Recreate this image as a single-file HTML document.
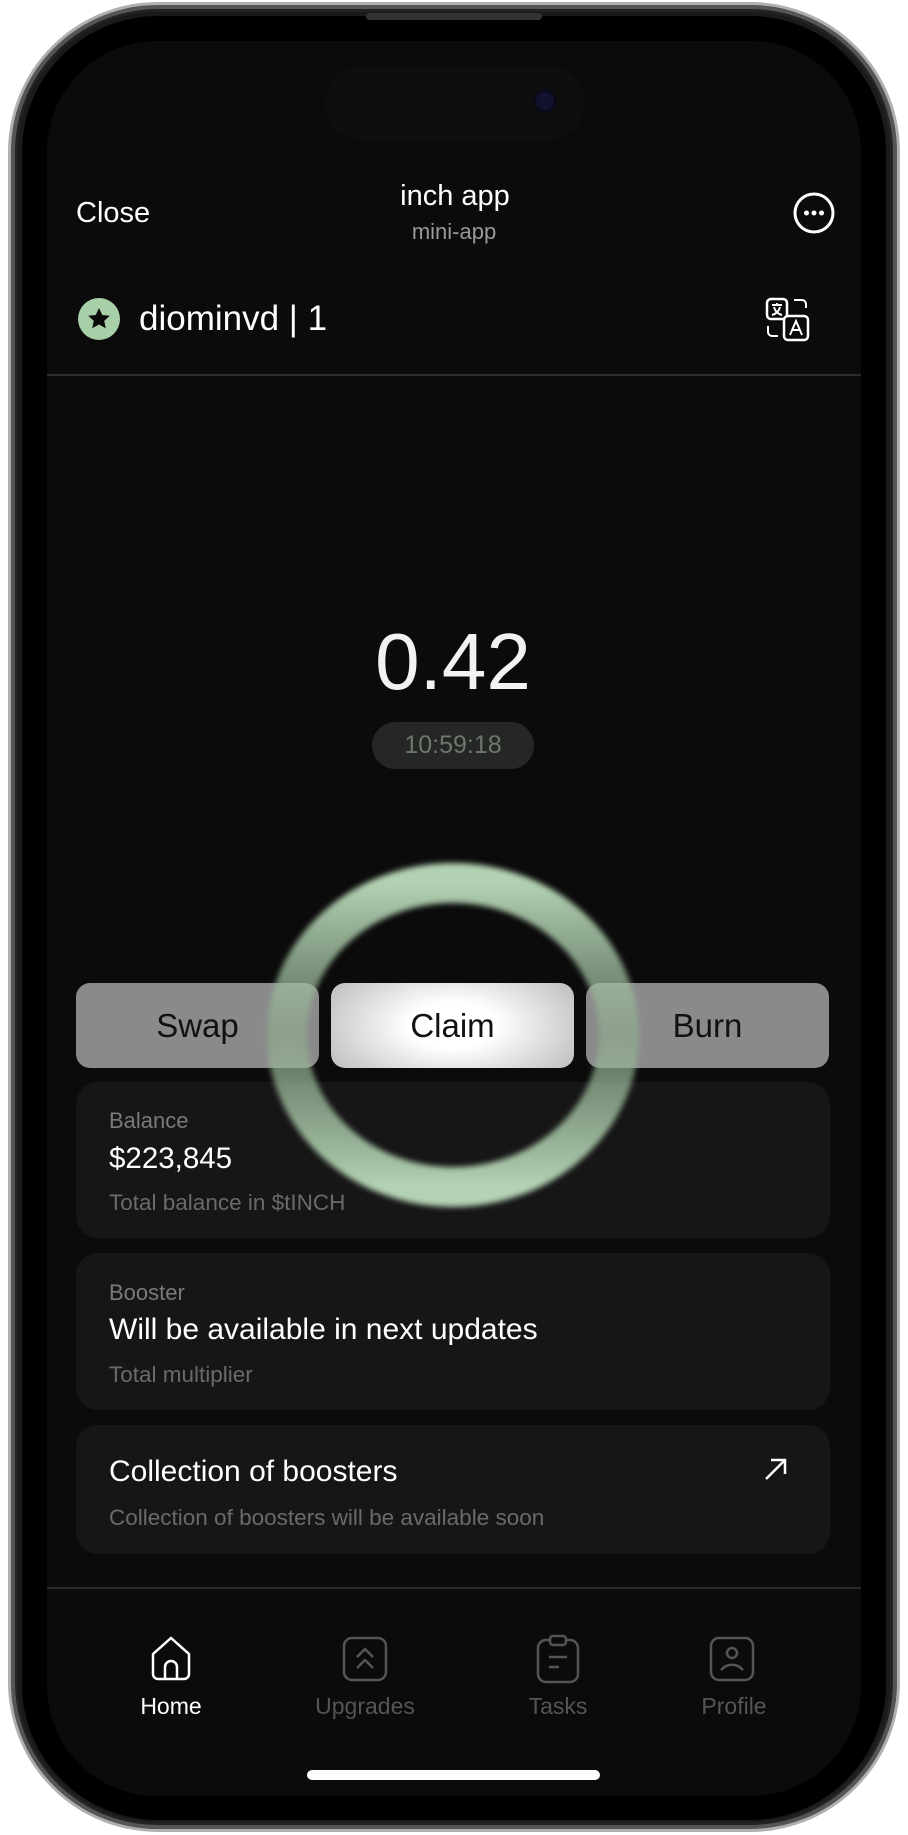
<!DOCTYPE html>
<html><head><meta charset="utf-8"><style>
*{margin:0;padding:0;box-sizing:border-box}
body{width:908px;height:1835px;background:#fff;position:relative;overflow:hidden;font-family:"Liberation Sans",sans-serif}
.frame{position:absolute;left:8px;top:2px;width:892px;height:1830px;border-radius:150px;background:#1a1a1a;border:3px solid #b0b0b0;box-shadow:inset 0 0 0 4px #555,inset 0 0 0 7px #222}
.bez{position:absolute;left:22px;top:16px;width:864px;height:1804px;border-radius:136px;background:#000}
.screen{position:absolute;left:47px;top:41px;width:814px;height:1755px;border-radius:110px;background:#0b0b0b;overflow:hidden}
.a{position:absolute}
.t{position:absolute;white-space:nowrap;line-height:1}
.btn{position:absolute;top:983px;height:85px;width:243px;border-radius:14px;background:#8a8a8a;color:#111;font-size:33px;display:flex;align-items:center;justify-content:center}
.card{position:absolute;left:76px;width:754px;background:#161616;border-radius:22px}
.nav{position:absolute;top:1693px;font-size:23px;color:#555;transform:translateX(-50%)}
</style></head><body>
<div class="frame"></div>
<div class="bez"></div>
<div class="a" style="left:366px;top:13px;width:176px;height:7px;border-radius:4px;background:#333"></div>
<div class="screen"></div>
<div class="a" style="left:325px;top:66px;width:260px;height:74px;border-radius:37px;background:#0e0e0e"></div>
<div class="a" style="left:536px;top:92px;width:18px;height:18px;border-radius:50%;background:#111130;box-shadow:0 0 0 3px #0a0a18"></div>
<div class="t" style="left:76px;top:199px;font-size:29px;color:#fff">Close</div>
<div class="t" style="left:0;width:910px;text-align:center;top:182px;font-size:29px;color:#fff">inch app</div>
<div class="t" style="left:0;width:908px;text-align:center;top:221px;font-size:22px;color:#999">mini-app</div>
<svg class="a" style="left:793px;top:192px" width="42" height="42" viewBox="0 0 42 42"><circle cx="21" cy="21" r="19" fill="none" stroke="#fff" stroke-width="3"/><circle cx="13.5" cy="21" r="2.5" fill="#fff"/><circle cx="21" cy="21" r="2.5" fill="#fff"/><circle cx="28.5" cy="21" r="2.5" fill="#fff"/></svg>
<svg class="a" style="left:78px;top:298px" width="42" height="42" viewBox="0 0 42 42"><circle cx="21" cy="21" r="21" fill="#a8d0a8"/><path d="M21 10l3.3 7 7.5.8-5.6 5.1 1.6 7.4L21 26.5l-6.8 3.8 1.6-7.4-5.6-5.1 7.5-.8z" fill="#0b0b0b"/></svg>
<div class="t" style="left:139px;top:301px;font-size:35px;color:#fff">diominvd | 1</div>
<svg class="a" style="left:764px;top:296px" width="48" height="48" viewBox="0 0 48 48" fill="none" stroke="#fff" stroke-width="2.5"><rect x="3" y="3" width="20" height="20" rx="4"/><rect x="20" y="20" width="24" height="24" rx="4" fill="#0b0b0b"/><path d="M8 9h10M13 7v2M10 11c1 4 4 7 8 8M16 11c-1 4-4 7-8 8" stroke-width="2"/><path d="M26 39l6-14 6 14M28.5 34h7" stroke-width="2"/><path d="M30 4h8a4 4 0 0 1 4 4v4M4 30v6a4 4 0 0 0 4 4h6" stroke-width="2"/></svg>
<div class="a" style="left:47px;top:374px;width:814px;height:2px;background:#2c2c2c"></div>
<div class="t" style="left:0;width:906px;text-align:center;top:622px;font-size:80px;color:#f2f2f2">0.42</div>
<div class="a" style="left:372px;top:722px;width:162px;height:47px;border-radius:24px;background:#252725"></div>
<div class="t" style="left:372px;width:162px;text-align:center;top:733px;font-size:25px;color:#6f756f">10:59:18</div>
<div class="btn" style="left:76px">Swap</div>
<div class="btn" style="left:331px;background:radial-gradient(ellipse 60% 90% at 50% 50%,#fff 30%,#bdbdbd 100%)">Claim</div>
<div class="btn" style="left:586px">Burn</div>
<div class="card" style="top:1082px;height:156px"></div>
<div class="t" style="left:109px;top:1110px;font-size:22px;color:#7a7a7a">Balance</div>
<div class="t" style="left:109px;top:1144px;font-size:29.5px;color:#fff">$223,845</div>
<div class="t" style="left:109px;top:1192px;font-size:22.5px;color:#6a6a6a">Total balance in $tINCH</div>
<svg class="a" style="left:253px;top:855px;filter:blur(3px)" width="400" height="360" viewBox="0 0 400 360"><defs><linearGradient id="g" x1="0" y1="0" x2="0" y2="1"><stop offset="0" stop-color="#bcdcbc" stop-opacity=".95"/><stop offset=".5" stop-color="#8fae8f" stop-opacity=".6"/><stop offset="1" stop-color="#bcdcbc" stop-opacity=".95"/></linearGradient></defs><ellipse cx="200" cy="180" rx="166" ry="152" fill="none" stroke="url(#g)" stroke-width="40"/></svg>
<div class="card" style="top:1253px;height:157px"></div>
<div class="t" style="left:109px;top:1282px;font-size:22px;color:#7a7a7a">Booster</div>
<div class="t" style="left:109px;top:1315px;font-size:30px;color:#fff">Will be available in next updates</div>
<div class="t" style="left:109px;top:1364px;font-size:22.5px;color:#6a6a6a">Total multiplier</div>
<div class="card" style="top:1425px;height:129px"></div>
<div class="t" style="left:109px;top:1457px;font-size:30px;color:#fff">Collection of boosters</div>
<div class="t" style="left:109px;top:1507px;font-size:22.5px;color:#6a6a6a">Collection of boosters will be available soon</div>
<svg class="a" style="left:762px;top:1455px" width="28" height="28" viewBox="0 0 28 28" fill="none" stroke="#fff" stroke-width="2.5"><path d="M4 24L23 5M9 5h14v14"/></svg>
<div class="a" style="left:47px;top:1587px;width:814px;height:2px;background:#2c2c2c"></div>
<svg class="a" style="left:148px;top:1636px" width="46" height="46" viewBox="0 0 46 46" fill="none" stroke="#fff" stroke-width="2.5"><path d="M5 18L23 2l18 16v20a5 5 0 0 1-5 5H10a5 5 0 0 1-5-5z"/><path d="M17 43V31a6 6 0 0 1 12 0v12"/></svg>
<svg class="a" style="left:342px;top:1636px" width="46" height="46" viewBox="0 0 46 46" fill="none" stroke="#555" stroke-width="2.5"><rect x="2" y="2" width="42" height="42" rx="8"/><path d="M15 21l8-8 8 8M15 32l8-8 8 8"/></svg>
<svg class="a" style="left:536px;top:1634px" width="44" height="50" viewBox="0 0 44 50" fill="none" stroke="#555" stroke-width="2.5"><rect x="2" y="6" width="40" height="42" rx="8"/><rect x="14" y="2" width="16" height="9" rx="3" fill="#0b0b0b"/><path d="M13 23h18M13 33h10"/></svg>
<svg class="a" style="left:709px;top:1636px" width="46" height="46" viewBox="0 0 46 46" fill="none" stroke="#555" stroke-width="2.5"><rect x="2" y="2" width="42" height="42" rx="8"/><circle cx="23" cy="17" r="5"/><path d="M12 34c6-7 16-7 22 0"/></svg>
<div class="nav" style="left:171px;color:#fff">Home</div>
<div class="nav" style="left:365px">Upgrades</div>
<div class="nav" style="left:558px">Tasks</div>
<div class="nav" style="left:734px">Profile</div>
<div class="a" style="left:307px;top:1770px;width:293px;height:10px;border-radius:5px;background:#fff"></div>
</body></html>
